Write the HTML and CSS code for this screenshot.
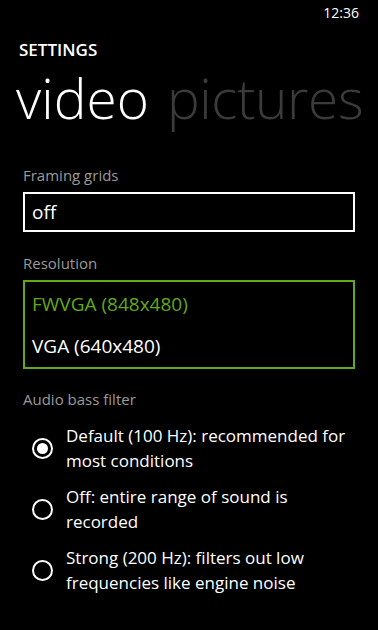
FILE: index.html
```html
<!DOCTYPE html>
<html lang="en">
<head>
<meta charset="utf-8">
<title>Settings</title>
<link rel="stylesheet" href="styles.css">
</head>
<body>
<div class="screen">
  <div class="status-bar"><span class="clock">12:36</span></div>
  <header class="header">
    <div class="app-title">SETTINGS</div>
    <div class="pivot">
      <span class="pivot-item active">video</span>
      <span class="pivot-item">pictures</span>
    </div>
  </header>
  <main class="content">
    <section class="field">
      <div class="field-label">Framing grids</div>
      <div class="picker">off</div>
    </section>
    <section class="field">
      <div class="field-label">Resolution</div>
      <div class="picker expanded">
        <div class="picker-option selected">FWVGA (848x480)</div>
        <div class="picker-option">VGA (640x480)</div>
      </div>
    </section>
    <section class="field audio">
      <div class="field-label">Audio bass filter</div>
      <div class="radio-list">
        <div class="radio checked"><span class="radio-mark"></span><span class="radio-text">Default (100 Hz): recommended for most conditions</span></div>
        <div class="radio"><span class="radio-mark"></span><span class="radio-text">Off: entire range of sound is recorded</span></div>
        <div class="radio"><span class="radio-mark"></span><span class="radio-text">Strong (200 Hz): filters out low frequencies like engine noise</span></div>
      </div>
    </section>
  </main>
</div>
</body>
</html>
```
FILE: styles.css
```css
html, body {
  margin: 0;
  padding: 0;
  background: #000;
}
body {
  font-family: "Open Sans", "Noto Sans", sans-serif;
  color: #fff;
  width: 378px;
  height: 630px;
  overflow: hidden;
}
.screen {
  display: flex;
  flex-direction: column;
}
.status-bar {
  display: flex;
  justify-content: flex-end;
  padding: 3px 19px 0 0;
  height: 20px;
}
.clock {
  font-size: 14px;
  line-height: 20px;
}
.header {
  padding-top: 17px;
  display: flex;
  flex-direction: column;
}
.app-title {
  padding-left: 19px;
  font-size: 17px;
  font-weight: 600;
  line-height: 20px;
}
.pivot {
  display: flex;
  gap: 18px;
  padding-left: 16px;
  white-space: nowrap;
}
.pivot-item {
  font-size: 55px;
  font-weight: 300;
  line-height: 75px;
  color: #3b3b3b;
}
.pivot-item.active {
  color: #fff;
}
.pivot-item + .pivot-item {
  letter-spacing: -0.4px;
}
.content {
  padding: 30px 23px 0 23px;
  display: flex;
  flex-direction: column;
}
.field + .field {
  margin-top: 21px;
}
.field.audio {
  margin-top: 20px;
}
.field-label {
  font-size: 15px;
  line-height: 20px;
  color: #9a9a9a;
  margin-bottom: 7px;
}
.picker {
  border: 2px solid #fff;
  height: 36px;
  line-height: 36px;
  font-size: 19px;
  padding-left: 7px;
}
.picker.expanded {
  border-color: #60a917;
  height: auto;
  padding-top: 1px;
  line-height: 42px;
}
.picker-option.selected {
  color: #60a917;
}
.radio-list {
  display: flex;
  flex-direction: column;
  gap: 11px;
  margin-top: 14px;
}
.radio {
  display: flex;
  align-items: center;
  gap: 13px;
  padding-left: 9px;
}
.radio-mark {
  flex: none;
  width: 17px;
  height: 17px;
  border: 2px solid #fff;
  border-radius: 50%;
  display: flex;
  align-items: center;
  justify-content: center;
}
.radio.checked .radio-mark::after {
  content: "";
  width: 11px;
  height: 11px;
  border-radius: 50%;
  background: #fff;
}
.radio-text {
  font-size: 17px;
  line-height: 25px;
  width: 280px;
}
```
